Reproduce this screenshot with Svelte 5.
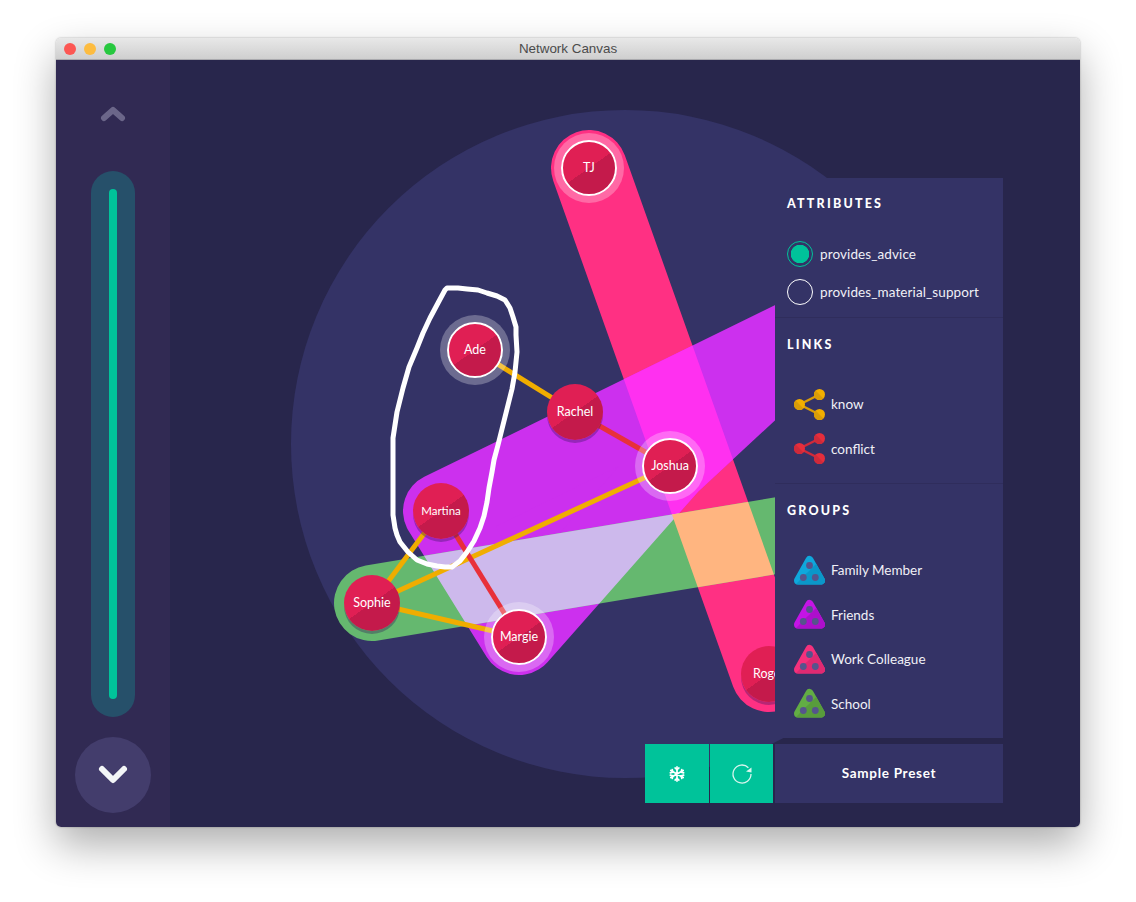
<script lang="ts">
  // canvas coordinates are page pixels, the stage starts at 170,60
  const originX = 170;
  const originY = 60;

  const pos = {
    TJ: [589, 168],
    Ade: [475, 350],
    Rachel: [575, 412],
    Joshua: [670, 466],
    Martina: [441, 511],
    Sophie: [372, 603],
    Margie: [519, 637],
    Roger: [769, 674]
  };

  const nodes = [
    { name: "TJ", selected: true },
    { name: "Ade", selected: true },
    { name: "Rachel", selected: false },
    { name: "Joshua", selected: true },
    { name: "Martina", selected: false, small: true },
    { name: "Sophie", selected: false },
    { name: "Margie", selected: true },
    { name: "Roger", selected: false }
  ];

  const edges = [
    ["Ade", "Rachel", "#f0ad00"],
    ["Sophie", "Martina", "#f0ad00"],
    ["Sophie", "Joshua", "#f0ad00"],
    ["Sophie", "Margie", "#f0ad00"],
    ["Rachel", "Joshua", "#e8303a"],
    ["Martina", "Margie", "#e8303a"]
  ];

  // hull outlines, the last points sit hidden under the panel
  const pinkHull = "589,168 769,674";
  const purpleHull = "441,511 519,637 670,466 823,324";
  const greenHull = "372,603 900,515";

  const scribble =
    "M447 288 L458 288 L467 289 L478 290 L487 293 L497 296 L505 300 L510 308 L513 317 L516 327 L516 335 L517 352 L515 372 L512 389 L508 405 L503 425 L498 445 L494 460 L492 472 L489 488 L487 502 L484 516 L480 528 L474 541 L467 552 L460 561 L452 567 L445 567 L437 566 L427 564 L417 560 L408 552 L400 542 L397 535 L395 528 L393 515 L393 502 L393 470 L393 438 L397 412 L403 388 L409 367 L417 348 L423 333 L430 318 L438 303 L445 290 Z";

  const links = [
    { label: "know", fill: "#f2ae00", shade: "#d99c08" },
    { label: "conflict", fill: "#e62e3c", shade: "#cf2a3a" }
  ];

  const groups = [
    { label: "Family Member", fill: "#0fa8dc", shade: "#0b97c9" },
    { label: "Friends", fill: "#c414e6", shade: "#ad0fcc" },
    { label: "Work Colleague", fill: "#f5317c", shade: "#e02a72" },
    { label: "School", fill: "#62ad44", shade: "#589c3c" }
  ];
</script>

<div class="window">
  <header class="titlebar">
    <div class="lights">
      <span class="light red"></span>
      <span class="light yellow"></span>
      <span class="light green"></span>
    </div>
    <span class="title">Network Canvas</span>
  </header>

  <div class="body">
    <nav class="timeline">
      <button class="up" aria-label="Previous">
        <svg viewBox="0 0 26 16" width="26" height="16">
          <path d="M4 12 L13 4 L22 12" fill="none" stroke="#6b6689" stroke-width="6" stroke-linecap="round" stroke-linejoin="round" />
        </svg>
      </button>
      <div class="track"><div class="bar"></div></div>
      <button class="down" aria-label="Next">
        <svg viewBox="0 0 32 22" width="32" height="22">
          <path d="M5 5 L16 16 L27 5" fill="none" stroke="#f3f6f7" stroke-width="6" stroke-linecap="round" stroke-linejoin="round" />
        </svg>
      </button>
    </nav>

    <main class="stage">
      <svg class="canvas" viewBox="{originX} {originY} 910 767">
        <defs>
          <mask id="m-purple" maskUnits="userSpaceOnUse" x="0" y="0" width="1136" height="902">
            <polygon points={purpleHull} fill="#fff" stroke="#fff" stroke-width="76" stroke-linejoin="round" />
          </mask>
          <mask id="m-green" maskUnits="userSpaceOnUse" x="0" y="0" width="1136" height="902">
            <polygon points={greenHull} fill="#fff" stroke="#fff" stroke-width="76" stroke-linejoin="round" />
          </mask>
          <clipPath id="tri-half">
            <polygon points="0,31 23,8 31,8 31,31" />
          </clipPath>
        </defs>

        <circle cx="625" cy="444" r="334" fill="#343366" />

        <polygon points={pinkHull} fill="#ff3083" stroke="#ff3083" stroke-width="76" stroke-linejoin="round" />
        <polygon points={purpleHull} fill="#cc30ee" stroke="#cc30ee" stroke-width="76" stroke-linejoin="round" />
        <polygon points={greenHull} fill="#65b86f" stroke="#65b86f" stroke-width="76" stroke-linejoin="round" />

        <!-- overlaps of the group hulls -->
        <g mask="url(#m-purple)">
          <polygon points={pinkHull} fill="#ff30f0" stroke="#ff30f0" stroke-width="76" stroke-linejoin="round" />
          <polygon points={greenHull} fill="#cdb9ec" stroke="#cdb9ec" stroke-width="76" stroke-linejoin="round" />
        </g>
        <g mask="url(#m-green)">
          <polygon points={pinkHull} fill="#ffb580" stroke="#ffb580" stroke-width="76" stroke-linejoin="round" />
        </g>

        {#each edges as [a, b, color]}
          <line x1={pos[a][0]} y1={pos[a][1]} x2={pos[b][0]} y2={pos[b][1]} stroke={color} stroke-width="5" />
        {/each}
      </svg>

      {#each nodes as node}
        <button
          class="node"
          class:selected={node.selected}
          class:small={node.small}
          style="left: {pos[node.name][0] - originX}px; top: {pos[node.name][1] - originY}px"
        >{node.name}</button>
      {/each}

      <svg class="canvas scribble" viewBox="{originX} {originY} 910 767">
        <path d={scribble} fill="none" stroke="#fff" stroke-width="5" stroke-linejoin="round" />
      </svg>

      <aside class="side">
        <div class="panel">
          <section class="attributes">
            <h3>ATTRIBUTES</h3>
            <ul class="radios">
              <li><span class="radio on"></span>provides_advice</li>
              <li><span class="radio"></span>provides_material_support</li>
            </ul>
          </section>

          <section class="links">
            <h3>LINKS</h3>
            <ul class="legend">
              {#each links as link}
                <li>
                  <svg viewBox="0 0 31 31" width="31" height="31">
                    <path d="M5.500 15.500 L25.500 5.500 M5.500 15.500 L25.500 25.500" stroke={link.shade} stroke-width="2.500" fill="none" />
                    <circle cx="5.500" cy="15.500" r="5.500" fill={link.fill} />
                    <circle cx="25.500" cy="5.500" r="5.500" fill={link.fill} />
                    <circle cx="25.500" cy="25.500" r="5.500" fill={link.fill} />
                    <path d="M1.600 11.600 L9.400 19.400 A5.500 5.500 0 0 1 1.600 11.600Z" fill={link.shade} />
                    <path d="M21.600 1.600 L29.400 9.400 A5.500 5.500 0 0 1 21.600 1.600Z" fill={link.shade} />
                    <path d="M21.600 21.600 L29.400 29.400 A5.500 5.500 0 0 1 21.600 21.600Z" fill={link.shade} />
                  </svg>
                  {link.label}
                </li>
              {/each}
            </ul>
          </section>

          <section class="groups">
            <h3>GROUPS</h3>
            <ul class="legend">
              {#each groups as group}
                <li>
                  <svg viewBox="0 0 31 31" width="31" height="31">
                    <path d="M15.500 5 L27 25.500 L4 25.500 Z" fill={group.fill} stroke={group.fill} stroke-width="8" stroke-linejoin="round" />
                    <path d="M15.500 5 L27 25.500 L4 25.500 Z" fill={group.shade} stroke={group.shade} stroke-width="8" stroke-linejoin="round" clip-path="url(#tri-half)" />
                    <circle cx="15.500" cy="10.500" r="3.400" fill="#55548c" />
                    <circle cx="9.300" cy="22.500" r="3.400" fill="#55548c" />
                    <circle cx="21.300" cy="22.500" r="3.400" fill="#55548c" />
                  </svg>
                  {group.label}
                </li>
              {/each}
            </ul>
          </section>
        </div>

        <div class="footer">
          <button class="action first" aria-label="Freeze">
            <svg viewBox="0 0 18 18" width="16" height="16" fill="none" stroke="#fff" stroke-width="1.900" stroke-linecap="round">
              <path d="M9 1 V17 M2 5 L16 13 M16 5 L2 13" />
              <path d="M6.800 2.200 L9 4.200 L11.200 2.200 M6.800 15.800 L9 13.800 L11.200 15.800" />
              <path d="M1.500 7.700 L4.300 7 L3.600 4 M16.500 7.700 L13.700 7 L14.400 4 M1.500 10.300 L4.300 11 L3.600 14 M16.500 10.300 L13.700 11 L14.400 14" />
            </svg>
          </button>
          <button class="action second" aria-label="Reset">
            <svg viewBox="0 0 22 22" width="22" height="22">
              <path d="M17.400 4.700 A9 9 0 1 0 20 11" fill="none" stroke="#d9f5ee" stroke-width="1.300" />
              <path d="M15 8.500 L20.500 4.500 L20.500 9.500 Z" fill="#d9f5ee" />
            </svg>
          </button>
          <div class="preset">Sample Preset</div>
        </div>
      </aside>
    </main>
  </div>
</div>

<style>
  :global(body) {
    margin: 0;
    background: #fff;
  }

  .window {
    box-sizing: border-box;
    width: 1024px;
    height: 789px;
    margin: 38px 0 75px 56px;
    display: flex;
    flex-direction: column;
    border-radius: 5px;
    overflow: hidden;
    box-shadow:
      0 0 2px rgba(0, 0, 0, 0.35),
      0 18px 42px rgba(0, 0, 0, 0.32);
    font-family: Lato, "Noto Sans", sans-serif;
  }

  .titlebar {
    position: relative;
    display: flex;
    align-items: center;
    justify-content: center;
    flex: 0 0 22px;
    background: linear-gradient(#e8e8e8, #cfcfcf);
    border-bottom: 1px solid #a9a9ad;
    box-sizing: border-box;
  }

  .lights {
    position: absolute;
    left: 8px;
    top: 5px;
    display: flex;
    gap: 8px;
  }

  .light {
    width: 12px;
    height: 12px;
    border-radius: 50%;
  }

  .red {
    background: #fc5753;
  }

  .yellow {
    background: #fdbc40;
  }

  .green {
    background: #27c83f;
  }

  .title {
    font-family: "Liberation Sans", sans-serif;
    font-size: 13.400px;
    color: #4b4b4b;
  }

  .body {
    flex: 1;
    display: flex;
    min-height: 0;
  }

  .timeline {
    flex: 0 0 114px;
    display: flex;
    flex-direction: column;
    align-items: center;
    background: #312a53;
    padding-top: 46px;
    box-sizing: border-box;
  }

  .timeline button {
    border: 0;
    padding: 0;
    background: none;
    display: flex;
    align-items: center;
    justify-content: center;
  }

  .up {
    height: 16px;
  }

  .track {
    box-sizing: border-box;
    width: 44px;
    height: 546px;
    margin-top: 49px;
    padding: 18px;
    border-radius: 22px;
    background: #26506a;
  }

  .bar {
    height: 100%;
    border-radius: 4px;
    background: #00c39a;
  }

  .timeline .down {
    width: 76px;
    height: 76px;
    margin-top: 20px;
    border-radius: 50%;
    background: #433d6c;
  }

  .stage {
    position: relative;
    flex: 1;
    overflow: hidden;
    background: #28264c;
  }

  .canvas {
    position: absolute;
    inset: 0;
    width: 100%;
    height: 100%;
  }

  .scribble {
    pointer-events: none;
  }

  .node {
    position: absolute;
    box-sizing: border-box;
    width: 56px;
    height: 56px;
    margin: -28px 0 0 -28px;
    padding: 0 0 2px;
    border: 0;
    border-radius: 50%;
    background: linear-gradient(145deg, #e01f54 50%, #c41a4b 50%);
    box-shadow: 0 3px 0 rgba(50, 20, 90, 0.35);
    color: #fff;
    font-family: inherit;
    font-size: 12.500px;
    font-weight: 400;
    text-align: center;
  }

  .node.small {
    font-size: 11.500px;
  }

  .node.selected {
    border: 2px solid #fff;
    box-shadow: 0 0 0 7px rgba(255, 255, 255, 0.28);
  }

  .side {
    position: absolute;
    top: 118px;
    right: 77px;
    bottom: 24px;
    width: 358px;
    display: flex;
    flex-direction: column;
    align-items: flex-end;
    gap: 6px;
  }

  .panel {
    box-sizing: border-box;
    flex: 1;
    width: 228px;
    background: #343366;
    color: #fff;
  }

  .panel section {
    box-sizing: border-box;
    padding: 20px 12px 0;
    border-bottom: 1px solid #2f2d5c;
  }

  .panel .attributes {
    height: 140px;
    padding-top: 19px;
  }

  .links {
    height: 166px;
  }

  .panel .groups {
    height: 254px;
    border-bottom: 0;
  }

  h3 {
    margin: 0;
    font-size: 12.500px;
    line-height: 14px;
    font-weight: 900;
    letter-spacing: 2.200px;
  }

  ul {
    list-style: none;
    margin: 0;
    padding: 0;
  }

  .radios {
    margin-top: 24px;
  }

  .radios li {
    display: flex;
    align-items: center;
    gap: 7px;
    height: 38px;
    font-size: 13.500px;
    letter-spacing: 0.100px;
    color: #f0f0f6;
  }

  .radio {
    box-sizing: border-box;
    width: 26px;
    height: 26px;
    border: 1px solid #fff;
    border-radius: 50%;
  }

  .radio.on {
    border-color: #00c39a;
    background: radial-gradient(circle, #00c39a 0 9px, transparent 9.500px);
  }

  .legend {
    margin-top: 30px;
    padding-left: 7px;
  }

  .legend li {
    display: flex;
    align-items: center;
    gap: 6px;
    height: 44.500px;
    font-size: 13.500px;
    color: #f0f0f6;
  }

  .footer {
    display: flex;
    flex: 0 0 59px;
    align-items: stretch;
  }

  .footer .action {
    border: 0;
    padding: 0;
    background: #00c39a;
    display: flex;
    align-items: center;
    justify-content: center;
  }

  .first {
    width: 64px;
    margin-right: 1px;
  }

  .second {
    width: 63px;
    margin-right: 2px;
  }

  .preset {
    width: 228px;
    padding-bottom: 2px;
    box-sizing: border-box;
    display: flex;
    align-items: center;
    justify-content: center;
    background: #343366;
    color: #fff;
    font-size: 13.500px;
    font-weight: 700;
    letter-spacing: 0.700px;
  }
</style>
